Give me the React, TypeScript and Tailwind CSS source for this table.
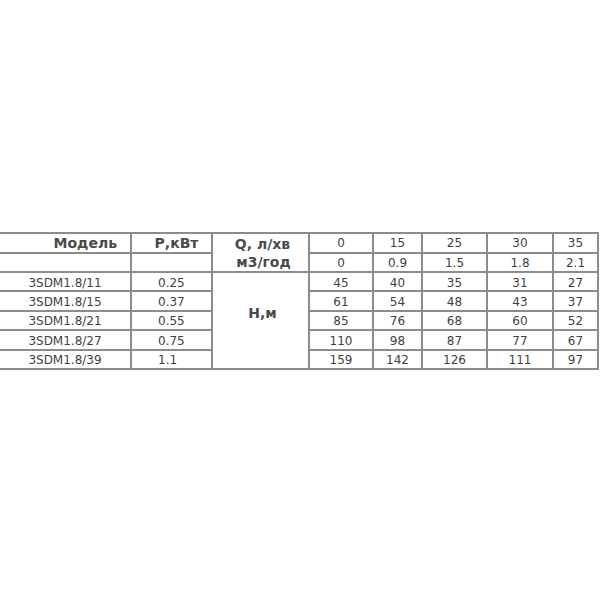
import React from "react";

const rows = [
  ["3SDM1.8/11", "0.25", ["45", "40", "35", "31", "27"]],
  ["3SDM1.8/15", "0.37", ["61", "54", "48", "43", "37"]],
  ["3SDM1.8/21", "0.55", ["85", "76", "68", "60", "52"]],
  ["3SDM1.8/27", "0.75", ["110", "98", "87", "77", "67"]],
  ["3SDM1.8/39", "1.1", ["159", "142", "126", "111", "97"]],
] as const;

const cell = "border-2 border-[#8c8c8c] p-0 leading-none";

export default function App() {
  return (
    <div
      className="w-[600px] h-[600px] bg-white overflow-hidden pt-[232px]"
      style={{ fontFamily: '"DejaVu Sans", sans-serif' }}
    >
      <table className="table-fixed border-collapse -ml-[2px] w-[599px] text-[#3f3f3f]">
        <colgroup>
          <col className="w-[132px]" />
          <col className="w-[81px]" />
          <col className="w-[97px]" />
          <col className="w-[64px]" />
          <col className="w-[49px]" />
          <col className="w-[65px]" />
          <col className="w-[66px]" />
          <col className="w-[45px]" />
        </colgroup>
        <tbody>
          <tr className="h-[20px]">
            <td className={`${cell} text-right pr-[13px] text-[14px] font-bold text-[#4a4a4a]`}>Модель</td>
            <td className={`${cell} text-center pl-[10px] text-[14px] font-bold text-[#4a4a4a]`}>Р,кВт</td>
            <td className={`${cell} [border-bottom-style:hidden] text-center pl-[4px] text-[14px] font-bold text-[#4a4a4a]`}>Q, л/хв</td>
            {["0", "15", "25", "30", "35"].map((v, i) => (
              <td key={i} className={`${cell} text-center text-[12px]`}>{v}</td>
            ))}
          </tr>
          <tr className="h-[19px]">
            <td className={cell}></td>
            <td className={cell}></td>
            <td className={`${cell} [border-top-style:hidden] text-center pl-[6px] text-[14px] font-bold text-[#4a4a4a]`}>м3/год</td>
            {["0", "0.9", "1.5", "1.8", "2.1"].map((v, i) => (
              <td key={i} className={`${cell} text-center text-[12px]`}>{v}</td>
            ))}
          </tr>
          {rows.map(([model, p, vals], r) => (
            <tr key={model} className="h-[19.4px]">
              <td className={`${cell} text-center text-[12px] pt-[2px]`}>{model}</td>
              <td className={`${cell} text-left pl-[26px] text-[12px] pt-[2px]`}>{p}</td>
              {r === 0 && (
                <td rowSpan={5} className={`${cell} text-center pl-[4px] pb-[14px] text-[14px] font-bold text-[#4a4a4a]`}>
                  Н,м
                </td>
              )}
              {vals.map((v, i) => (
                <td key={i} className={`${cell} text-center text-[12px] pt-[2px]`}>{v}</td>
              ))}
            </tr>
          ))}
        </tbody>
      </table>
    </div>
  );
}
